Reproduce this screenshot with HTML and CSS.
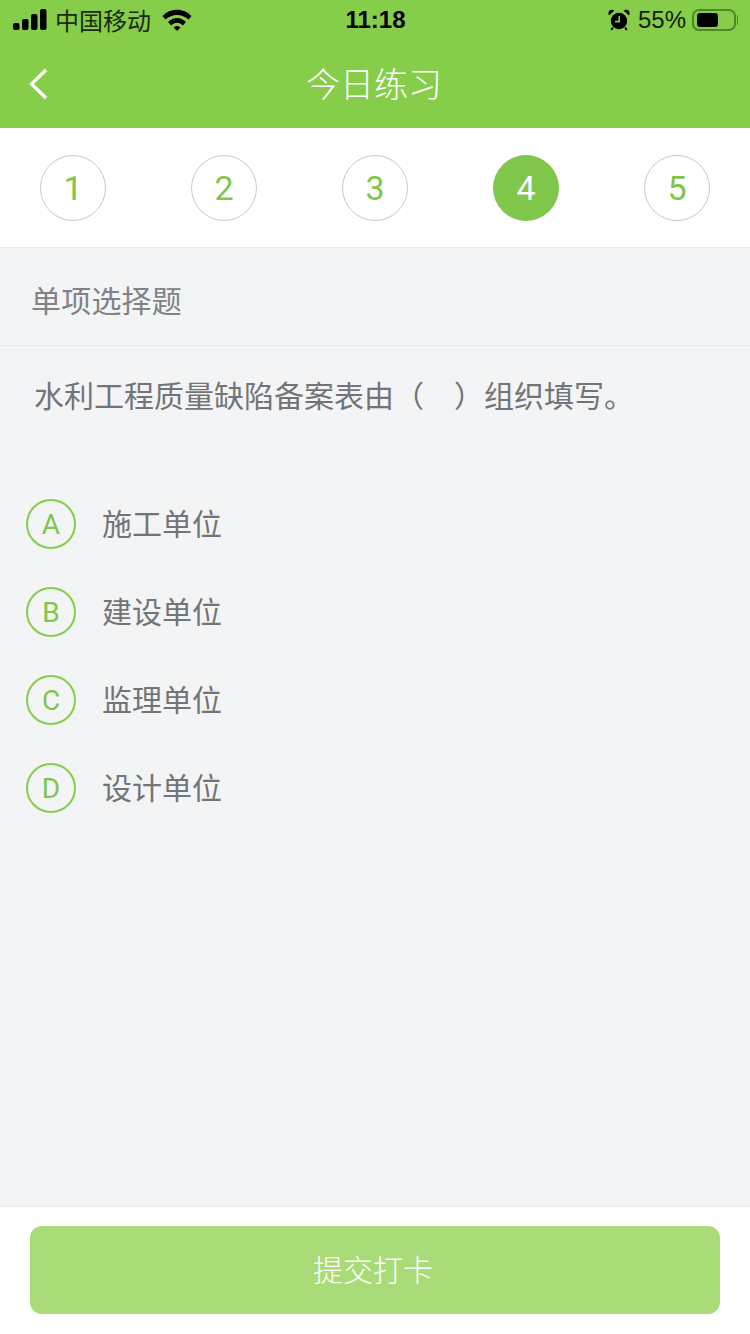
FILE: index.html
```html
<!DOCTYPE html>
<html lang="zh-CN">
<head>
    <meta charset="UTF-8">
    <meta name="viewport" content="width=device-width, initial-scale=1.0">
    <title>今日练习</title>
    <link rel="stylesheet" href="styles.css">
</head>
<body>
    <div class="page">
        <!-- Header -->
        <header class="header">
            <div class="status-bar">
                <div class="status-left">
                    <svg class="signal" width="34" height="22" viewBox="0 0 34 22">
                        <rect x="0" y="14" width="6.5" height="7" rx="2"/>
                        <rect x="9" y="10" width="6.5" height="11" rx="2"/>
                        <rect x="18" y="5" width="6.5" height="16" rx="2"/>
                        <rect x="27" y="0" width="6.5" height="21" rx="2"/>
                    </svg>
                    <span class="carrier">中国移动</span>
                    <svg class="wifi" width="30" height="22" viewBox="0 0 30 22">
                        <path d="M0.5 7 C8 -1.5 22 -1.5 29.5 7 L26.5 10.5 C20 4.5 10 4.5 3.5 10.5 Z"/>
                        <path d="M6 13 C11.5 7.5 18.5 7.5 24 13 L20.8 16.4 C17.5 13 12.5 13 9.2 16.4 Z"/>
                        <path d="M11.5 18.6 C13.5 16.4 16.5 16.4 18.5 18.6 L15 22 Z"/>
                    </svg>
                </div>
                <div class="status-time">11:18</div>
                <div class="status-right">
                    <svg class="alarm" width="22" height="22" viewBox="0 0 22 22">
                        <circle cx="11" cy="12" r="8.2"/>
                        <path d="M1 6.5 L6.5 1.5 Q3 -0.2 1 2 Q0 4 1 6.5 Z"/>
                        <path d="M21 6.5 L15.5 1.5 Q19 -0.2 21 2 Q22 4 21 6.5 Z"/>
                        <path d="M5 18.5 L3.2 21 M17 18.5 L18.8 21" stroke="#000" stroke-width="1.8" fill="none"/>
                        <path d="M11.2 7 V12.6 H7" stroke="#86cd4a" stroke-width="1.6" fill="none"/>
                    </svg>
                    <span class="percent">55%</span>
                    <div class="battery"><div class="battery-level"></div></div>
                    <div class="battery-cap"></div>
                </div>
            </div>
            <div class="nav-bar">
                <svg class="back" width="24" height="34" viewBox="0 0 24 34">
                    <path d="M19 3 L4.5 17 L19 31" fill="none" stroke="#fff" stroke-width="3.4"/>
                </svg>
                <h1 class="nav-title">今日练习</h1>
            </div>
        </header>

        <!-- Question numbers -->
        <div class="steps">
            <div class="step">1</div>
            <div class="step">2</div>
            <div class="step">3</div>
            <div class="step active">4</div>
            <div class="step">5</div>
        </div>

        <!-- Question -->
        <main class="main">
            <div class="section-title">单项选择题</div>
            <p class="question">水利工程质量缺陷备案表由（　）组织填写。</p>
            <ul class="options">
                <li class="option"><span class="option-key">A</span><span class="option-text">施工单位</span></li>
                <li class="option"><span class="option-key">B</span><span class="option-text">建设单位</span></li>
                <li class="option"><span class="option-key">C</span><span class="option-text">监理单位</span></li>
                <li class="option"><span class="option-key">D</span><span class="option-text">设计单位</span></li>
            </ul>
        </main>

        <!-- Submit -->
        <footer class="footer">
            <button class="submit">提交打卡</button>
        </footer>
    </div>
</body>
</html>
```

FILE: styles.css
```css
* {
    box-sizing: border-box;
}
body {
    margin: 0;
    font-family: "Liberation Sans", "Noto Sans CJK SC", sans-serif;
    background: #f2f4f6;
}
.page {
    width: 750px;
    height: 1334px;
    display: flex;
    flex-direction: column;
    overflow: hidden;
}
.header {
    height: 128px;
    background: #86cd4a;
}
.status-bar {
    height: 40px;
    padding: 0 12px 0 13px;
    display: grid;
    grid-template-columns: 1fr auto 1fr;
    align-items: center;
    color: #000;
}
.status-left,
.status-right {
    display: flex;
    align-items: center;
}
.status-right {
    justify-content: flex-end;
}
.signal {
    display: block;
    margin-right: 8px;
}
.carrier {
    font-family: "Noto Sans CJK SC", sans-serif;
    font-size: 24px;
    line-height: 40px;
    color: #1a2a10;
}
.wifi {
    display: block;
    margin-left: 11px;
}
.status-time {
    font-size: 24px;
    font-weight: bold;
}
.alarm {
    display: block;
    margin-right: 8px;
}
.percent {
    font-size: 24px;
    color: #12200a;
    margin-right: 6px;
}
.battery {
    width: 44px;
    height: 22px;
    padding: 2px 3px;
    border: 2px solid #4a8a26;
    border-radius: 7px;
}
.battery-level {
    width: 21px;
    height: 100%;
    background: #000;
    border-radius: 3px;
}
.battery-cap {
    width: 1px;
    height: 10px;
    margin-left: 1px;
    background: #4a8a26;
}
.nav-bar {
    height: 88px;
    padding: 0 2px 4px 0;
    position: relative;
    display: flex;
    align-items: center;
    justify-content: center;
}
.back {
    position: absolute;
    left: 27px;
    top: 27px;
}
.nav-title {
    margin: 0;
    font-family: "Noto Sans CJK SC", sans-serif;
    font-size: 34px;
    font-weight: 300;
    color: #fff;
}
.steps {
    height: 120px;
    padding: 27px 40px 0;
    display: flex;
    justify-content: space-between;
    align-items: flex-start;
    background: #fff;
    border-bottom: 1px solid #e6e8ea;
}
.step {
    width: 66px;
    height: 66px;
    display: flex;
    align-items: center;
    justify-content: center;
    border: 1px solid #c9c9c9;
    border-radius: 50%;
    font-family: Roboto, sans-serif;
    font-size: 34px;
    color: #7fc64a;
}
.step.active {
    background: #7fc64a;
    border-color: #7fc64a;
    color: #fff;
}
.main {
    flex: 1;
    min-height: 0;
}
.section-title {
    height: 98px;
    padding: 5px 30px 0 31px;
    display: flex;
    align-items: center;
    font-family: "Noto Sans CJK SC", sans-serif;
    font-size: 30px;
    letter-spacing: 0.2px;
    color: #808285;
    border-bottom: 1px solid #e6e8ea;
}
.question {
    margin: 0;
    padding: 26px 30px 0 34px;
    font-family: "Noto Sans CJK SC", sans-serif;
    font-size: 30px;
    line-height: 44px;
    color: #727477;
}
.options {
    list-style: none;
    margin: 0;
    padding: 83px 0 0 26px;
    display: flex;
    flex-direction: column;
    gap: 38px;
}
.option {
    height: 50px;
    display: flex;
    align-items: center;
}
.option-key {
    width: 50px;
    height: 50px;
    display: flex;
    align-items: center;
    justify-content: center;
    border: 2px solid #86cd4a;
    border-radius: 50%;
    font-family: Roboto, sans-serif;
    font-size: 28px;
    color: #7fc64a;
}
.option-text {
    margin-left: 26px;
    padding-bottom: 4px;
    font-family: "Noto Sans CJK SC", sans-serif;
    font-size: 30px;
    color: #727477;
}
.footer {
    height: 128px;
    padding: 19px 30px 0;
    background: #fff;
    border-top: 1px solid #e6e8ea;
}
.submit {
    display: block;
    width: 100%;
    height: 88px;
    padding: 0 4px 4px 0;
    border: 0;
    border-radius: 12px;
    background: #a9dc78;
    font-family: "Noto Sans CJK SC", sans-serif;
    font-size: 30px;
    font-weight: 300;
    color: #fff;
}
```
